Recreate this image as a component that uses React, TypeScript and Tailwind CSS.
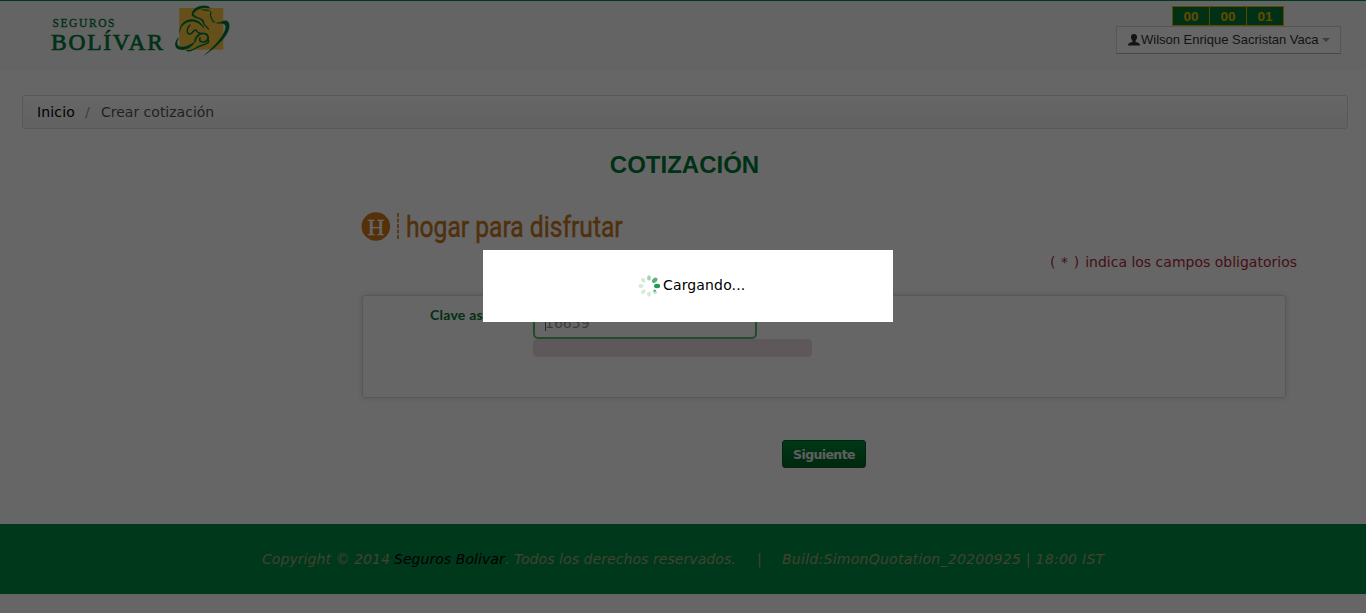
const vd = "font-['DejaVu_Sans',Verdana,sans-serif]";

function Family() {
  return (
    <svg className="ml-[11px] mt-[3px]" width="57" height="53" viewBox="0 0 57 53">
      <rect x="4.3" y="4" width="44" height="41.7" fill="#ffc942" />
      <g fill="#007a38">
        <path d="M16.5 11C17 4 25 0 33 2L36 4.500C29 3 22 4 18.500 10C22 15 28 12 29.500 19L27.500 18C26 14 19 15 16.500 11Z" />
        <path d="M25 6C29 4.500 33 5.500 36 7.500C31 6.500 28 6.500 25 6Z" />
        <path d="M39 18.500C47 20 50 13 54 19C57 28 45 41 28.500 52C38 43 51 31 50.500 22C49 18 45 21 39 18.500Z" />
        <path d="M5 31C2 22 10 14 19 15.500C25 16.500 28 21 29.500 25C26 21 22 17 16.500 17.500C9 18 4 24 5 31Z" />
        <path d="M4.500 33C1 35 -2 41 2 44.500C10 49 18 42 21 37C16 40 10 44 4.500 42.500C1 41 2 37 4.500 33Z" />
      </g>
      <g fill="none" stroke="#007a38" strokeLinecap="round">
        <path strokeWidth="1.3" d="M36 8C34 13 37 13 37 16L39 18M28 17C28 22 32 22 33.500 25" />
        <path strokeWidth="1.5" d="M15 21C12 24 11 28 14 30C18 31 18 25 21 26C22 28 23 29 25 29" />
        <path strokeWidth="1.7" d="M20 37C21 31 27 28 31 30C35 33 33 38 28 38C25 38 24 36 25 34" />
        <path strokeWidth="1.5" d="M33 35C36 41 27 40 21 44C18 46 15 47 12 46.500" />
      </g>
    </svg>
  );
}

function Spinner() {
  const petals = ["#a3d5b5", "#5cae7c", "#249b53", "#c4e5d0", "#d3ebdc", "#d3ebdc", "#d3ebdc", "#d3ebdc"];
  return (
    <svg width="22" height="22" viewBox="0 0 22 22">
      {petals.map((c, i) => (
        <ellipse key={i} cx="11" cy="2.900" rx={i === 1 || i === 2 ? 2.2 : 1.9} ry={i === 1 || i === 2 ? 3.1 : 2.6} fill={c} transform={`rotate(${i * 45} 11 11)`} />
      ))}
      <circle cx="16.800" cy="15.800" r="1" fill="#3ca466" />
    </svg>
  );
}

export default function App() {
  return (
    <div className={`relative h-[613px] w-[1366px] overflow-hidden bg-white text-[14px] leading-5 text-[#333] ${vd}`}>
      <header className="flex h-[70px] items-start border-t border-[#008c46] bg-[#fafafa] pl-[50px]">
        <div className="w-[114px] pt-[14px]">
          <svg className="block" width="114" height="44" viewBox="-1 -1 114 44" fill="#007a38" stroke="#007a38" fontFamily="Liberation Serif">
            <text x="1.500" y="11" fontSize="11.500" strokeWidth=".35" textLength="62">SEGUROS</text>
            <text x="0" y="33.500" fontSize="23.500" strokeWidth=".7" textLength="112">BOLÍVAR</text>
          </svg>
        </div>
        <Family />
        <div className="mr-[25px] ml-auto flex w-[225px] flex-col pt-[5px] font-['Liberation_Sans',sans-serif]">
          <div className="ml-[56px] flex h-5 w-[112px] border border-[#f0b400] bg-[#007a38] text-center text-[13.5px] leading-[19px] font-bold text-[#f4bc00]">
            <span className="w-[37px] border-r border-[#f0b400]">00</span>
            <span className="w-[37px] border-r border-[#f0b400]">00</span>
            <span className="w-[36px]">01</span>
          </div>
          <div className="flex h-[28px] items-center border border-[#d8d8d8] border-b-[#b5b5b5] bg-white pl-[11px] text-[13px] whitespace-nowrap">
            <svg className="mr-px" width="12" height="12" viewBox="0 0 12 12" fill="#333"><path d="M6 0C8.300 0 9.300 1.600 9 3.600C8.900 5 8.300 6 7.500 6.800V7.800L10 8.800C11.500 9.300 12 10 12 11.500H0C0 10 .5 9.300 2 8.800L4.500 7.800V6.800C3.700 6 3.100 5 3 3.600C2.700 1.600 3.700 0 6 0Z" /></svg>
            <span>Wilson Enrique Sacristan Vaca</span>
            <svg className="ml-[3px]" width="8" height="4" viewBox="0 0 8 4" fill="#999"><path d="M0 0H8L4 4Z" /></svg>
          </div>
        </div>
      </header>

      <nav className="mt-[25px] mr-[18px] ml-[22px] flex h-[34px] items-center rounded-[3px] border border-[#dcdcdc] bg-linear-to-b from-white to-[#f4f4f4] pl-[14px]">
        <span className="w-[38px] tracking-[0.15px] whitespace-nowrap text-black">Inicio</span>
        <span className="ml-[10px] w-[16px] text-[#999]">/</span>
        <span className="text-[#555]">Crear cotización</span>
      </nav>

      <h1 className="mt-[21px] pl-[3px] text-center font-['Liberation_Sans',sans-serif] text-[24px] leading-[30px] font-bold text-[#007a38]">COTIZACIÓN</h1>

      <svg className="mt-[30px] ml-[361px] block" width="270" height="38" viewBox="0 0 270 38">
        <circle cx="14.800" cy="16.500" r="14.300" fill="#d47818" />
        <text x="6.500" y="24.500" fontFamily="Liberation Serif" fontSize="24" fill="#fff" stroke="#fff" strokeWidth=".4" textLength="17" lengthAdjust="spacingAndGlyphs">H</text>
        <path d="M37 3V29" stroke="#d47818" strokeWidth="1.600" strokeDasharray="4 1.500" />
        <g transform="translate(45 27) scale(.72 1)"><text fontFamily="Roboto" fontSize="29.500" fill="#c97820" stroke="#c97820" strokeWidth=".5" textLength="301" lengthAdjust="spacingAndGlyphs">hogar para disfrutar</text></g>
      </svg>
      <p className="mt-[4px] mr-[69px] text-right text-[#b02a37]"><span className="mr-[1px] tracking-[0.6px]">( * )</span> indica los campos obligatorios</p>

      <section className="mt-[23px] ml-[362px] flex h-[103px] w-[924px] rounded-[3px] border border-[#ddd] bg-white pt-[9px] shadow-[0_0_6px_rgba(0,0,0,0.15)]">
        <label className="w-[170px] pl-[67px] font-[Lato,sans-serif] text-[14px] font-bold tracking-[0.25px] whitespace-nowrap text-[#007a38]">Clave asesor</label>
        <div className="w-[280px]">
          <div className="flex h-[34px] w-[224px] items-center rounded-[5px] border-2 border-[#5cb866] pt-px pl-[10px] text-[#999]">
            <i className="mt-px h-4 w-px bg-[#666]" /><span className="-ml-px">16659</span>
          </div>
          <div className="h-[18px] w-[279px] rounded-[4px] bg-[#eddbe0]" />
        </div>
      </section>

      <button className="mt-[42px] ml-[782px] block h-[28px] w-[84px] rounded-[3px] border border-[#006020] bg-linear-to-b from-[#008c3a] to-[#006425] pt-px text-[12.5px] font-bold tracking-[-0.6px] whitespace-nowrap text-[#eee]">Siguiente</button>

      <footer className="mt-[56px] flex h-[70px] items-center bg-[#008c46] pl-[262px] whitespace-pre text-[#a3a676] italic">
        <span className="w-[132px] tracking-[0.06px]">Copyright © 2014 </span>
        <span className="w-[111px] tracking-[0.06px] text-black">Seguros Bolivar</span>
        <span className="w-[252px] tracking-[0.07px]">. Todos los derechos reservados.</span>
        <span className="w-[25px]">|</span>
        <span className="tracking-[0.27px]">Build:SimonQuotation_20200925 | 18:00 IST</span>
      </footer>

      <div className="absolute inset-0 flex items-start bg-black/60 pt-[250px] pl-[483px]">
        <div className="flex h-[72px] w-[410px] items-center bg-white pb-[2px] pl-[155px] text-black">
          <div className="pt-px"><Spinner /></div>
          <span className="ml-[3px] tracking-[0.15px]">Cargando...</span>
        </div>
      </div>
    </div>
  );
}
